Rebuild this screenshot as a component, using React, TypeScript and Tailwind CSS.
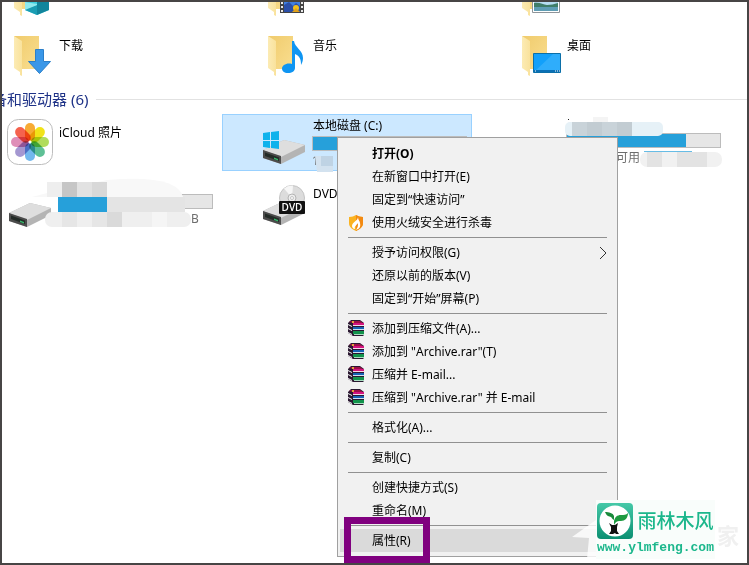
import { ReactNode } from "react";

const Folder = ({ children }: { children?: ReactNode }) => (
  <svg viewBox="0 0 48 48" className="w-12 h-12 shrink-0">
    <defs>
      <linearGradient id="folderBack" x1="0" y1="0" x2="1" y2="1">
        <stop offset="0" stopColor="#f0cb6c" />
        <stop offset="1" stopColor="#f9de90" />
      </linearGradient>
      <linearGradient id="folderFront" x1="0" y1="0" x2="1" y2="0">
        <stop offset="0" stopColor="#fcebb4" />
        <stop offset="1" stopColor="#f9e29c" />
      </linearGradient>
    </defs>
    <path d="M6 5h25v33H12z" fill="url(#folderBack)" />
    <path d="M6 5l8 5v35l-2-1v-3l-6-4z" fill="url(#folderFront)" />
    {children}
  </svg>
);

const ObjectsIcon = () => (
  <Folder>
    <path d="M17 24l12-5 12 5v15l-12 5-12-5z" fill="#3fd0df" />
    <path d="M29 30l12-6v15l-12 5z" fill="#12859c" />
    <path d="M17 38l12-4v10l-12-5z" fill="#1b9db3" />
    <path d="M17 31l12 2v1l-12 5z" fill="#8fe9ee" />
  </Folder>
);

const VideoIcon = () => (
  <Folder>
    <path d="M18 22h24v20H18z" fill="#444" />
    <path d="M22 23h16v18H22z" fill="#3f7fe0" />
    <path d="M22 34l5-3 4 4 3-3 4 3v6H22z" fill="#2b4fa8" />
    <circle cx="34" cy="37" r="3" fill="#f2c11d" />
    <path d="M30 41l4-4 4 4z" fill="#e0a01a" />
    <path d="M20 23v19M40 23v19" stroke="#e8e8e8" strokeWidth="2" strokeDasharray="2 2" />
  </Folder>
);

const PictureIcon = () => (
  <Folder>
    <path d="M16.5 22.5h27v19h-27z" fill="#fff" stroke="#8e9499" />
    <path d="M18 24h24v16H18z" fill="#b7dcf1" />
    <path d="M18 32c6-1 9 2 13 2s7-1 11-2v4H18z" fill="#3f7d68" />
    <path d="M18 36h24v4H18z" fill="#5f9db4" />
  </Folder>
);

const DownloadIcon = () => (
  <Folder>
    <path d="M27.5 18.5h8v12h7L31.5 42.5 20.5 30.5h7z" fill="#3a97e8" stroke="#2b7fc9" />
  </Folder>
);

const MusicIcon = () => (
  <Folder>
    <path
      d="M30 10h2c1 7 9 9 9 17 0 3-1 5-2 7 0-7-2-9-6-11v14c0 3-3 5-7 5s-6-2-6-4.5 3-5 7-5c1 0 2 0 3 .5z"
      fill="#0f95f2"
    />
  </Folder>
);

const DesktopIcon = () => (
  <Folder>
    <path d="M17.5 22.5h27v19h-27z" fill="#12a0fa" stroke="#0b6fa8" />
    <path d="M18 41L37 23h7v18z" fill="#2fadfb" />
    <path d="M18 39h26v2H18z" fill="#0a70b5" />
    <path d="M19 40h1M39 40h1M41 40h1M43 40h1" stroke="#fff" />
  </Folder>
);

const petals = ["#f7a21f", "#f0e000", "#a9d84a", "#4cb98a", "#62b0ec", "#9a8ccc", "#dc82b0", "#f4513a"];

const PhotosIcon = () => (
  <svg viewBox="0 0 48 48" className="w-12 h-12 shrink-0 overflow-visible">
    <rect x="-0.5" y="1.5" width="45" height="45" rx="11" fill="#fff" stroke="#bdbdbd" />
    {petals.map((color, i) => (
      <rect
        key={color}
        x="17"
        y="5"
        width="10"
        height="18"
        rx="5"
        fill={color}
        opacity="0.9"
        className="mix-blend-multiply"
        transform={`rotate(${i * 45} 22 24)`}
      />
    ))}
    <circle cx="22" cy="24" r="1.5" fill="#fff" />
  </svg>
);

const DriveShape = ({ y }: { y: number }) => (
  <g transform={`translate(0 ${y})`}>
    <path d="M1 10L22 0l21 5v7L19 24 1 18z" fill="#b4b4b4" />
    <path d="M1 10L22 0l21 5-24 12z" fill="#dedede" />
    <path d="M1 10l18 6v8L1 18z" fill="#4c4c4c" />
    <path d="M3 12.5l14 5V21L3 16z" fill="#232b27" />
    <path d="M12 17.5l4 1.5v1.5L12 19z" fill="#35b96a" />
  </g>
);

const DriveIcon = () => (
  <svg viewBox="0 0 48 48" className="w-12 h-12 shrink-0">
    <DriveShape y={24} />
  </svg>
);

const SystemDriveIcon = () => (
  <svg viewBox="0 0 48 48" className="w-12 h-12 shrink-0">
    <DriveShape y={22} />
    <path d="M1 15l7-1v8H1zM9 14l8-1v9H9zM1 23h7v7l-7-1zM9 23h8v8l-8-1z" fill="#0fb2ec" />
  </svg>
);

const DvdIcon = () => (
  <svg viewBox="0 0 48 48" className="w-12 h-12 shrink-0">
    <DriveShape y={22} />
    <circle cx="30" cy="19" r="12.5" fill="#dcdcdc" stroke="#c4c4c4" />
    <path d="M30 19L22 9.5a12 12 0 0 1 9-3z" fill="#f6f6f6" />
    <circle cx="30" cy="19" r="4" fill="#eee" stroke="#b4b4b4" />
    <circle cx="30" cy="19" r="1.5" fill="#fff" stroke="#c4c4c4" />
    <rect x="17" y="22" width="26" height="13" rx="1" fill="#111" />
    <text x="30" y="32" textAnchor="middle" fontSize="10" fontWeight="600" fill="#fff" fontFamily="Open Sans, sans-serif">
      DVD
    </text>
  </svg>
);

const RarIcon = () => (
  <svg viewBox="0 0 16 16" className="w-4 h-4 -translate-y-px">
    <path d="M0 3l3-3h9l4 3v12l-1 1H5l-5-3z" fill="#2a1830" />
    <path d="M1 2l2-1h9l3 2H5z" fill="#9c0f48" />
    <path d="M5 3h11v2H5z" fill="#d4147e" />
    <path d="M5 5h11v1H5z" fill="#f3dcea" />
    <path d="M5 7h11v2H5z" fill="#1562b4" />
    <path d="M5 9h11v1H5z" fill="#cfe0f2" />
    <path d="M5 11h11v3H5z" fill="#12934c" />
    <path d="M6 14h10v1H6z" fill="#a9dcc0" />
    <path d="M0 4l4 2v1L0 5zM0 8l4 2v1L0 9zM0 12l4 2v1l-4-2z" fill="#f6f6f6" />
    <path d="M4 1h2v2H4z" fill="#e2a43b" />
  </svg>
);

const ShieldIcon = () => (
  <svg viewBox="0 0 16 16" className="w-4 h-4">
    <path d="M1 2c3 0 5-1 7-2 2 1 4 2 7 2v6c0 4-3 6-7 8-4-2-7-4-7-8z" fill="#fbb321" />
    <path d="M8 0c2 1 4 2 7 2v6c0 4-3 6-7 8z" fill="#f38a12" />
    <path d="M10 2c0 4-6 5-6 9 0 1 1 3 3 3-1-3 2-4 3-6 0 3 0 4-2 7 3-1 5-3 4-7 0-2-2-3-2-6z" fill="#fff" />
  </svg>
);

type TileProps = {
  icon: ReactNode;
  label: string;
  used?: number;
  info?: string;
  infoClass?: string;
  selected?: boolean;
  children?: ReactNode;
};

const Tile = ({ icon, label, used, info, infoClass = "", selected, children }: TileProps) => (
  <li
    className={`relative flex gap-0.5 border pl-[39px] pt-[3px] pb-1 ${
      selected ? "border-[#99d1ff] bg-[#cce8ff]" : "border-transparent"
    }`}
  >
    {icon}
    {used === undefined ? (
      <span className="pl-px pt-[7px] leading-4 whitespace-nowrap">{label}</span>
    ) : (
      <div className="flex flex-col gap-0.5 w-[155px] h-12 leading-4 whitespace-nowrap">
        <span className="h-4 pl-px">{label}</span>
        <div className="h-[15px] shrink-0 border border-[#bcbcbc] bg-[#e6e6e6]">
          <div className="h-full bg-[#26a0da]" style={{ width: `${used}%` }} />
        </div>
        <span className={`text-[#6d6d6d] ${infoClass}`}>{info}</span>
      </div>
    )}
    {children}
  </li>
);

type MenuItem = { text: string; bold?: boolean; icon?: ReactNode; sub?: boolean; active?: boolean };

const menu: MenuItem[][] = [
  [
    { text: "打开(O)", bold: true },
    { text: "在新窗口中打开(E)" },
    { text: "固定到“快速访问”" },
    { text: "使用火绒安全进行杀毒", icon: <ShieldIcon /> },
  ],
  [{ text: "授予访问权限(G)", sub: true }, { text: "还原以前的版本(V)" }, { text: "固定到“开始”屏幕(P)" }],
  [
    { text: "添加到压缩文件(A)...", icon: <RarIcon /> },
    { text: '添加到 "Archive.rar"(T)', icon: <RarIcon /> },
    { text: "压缩并 E-mail...", icon: <RarIcon /> },
    { text: '压缩到 "Archive.rar" 并 E-mail', icon: <RarIcon /> },
  ],
  [{ text: "格式化(A)..." }],
  [{ text: "复制(C)" }],
  [{ text: "创建快捷方式(S)" }, { text: "重命名(M)" }],
  [{ text: "属性(R)", active: true }],
];

const ContextMenu = () => (
  <div className="absolute left-[335px] top-[135px] w-[281px] border border-[#a0a0a0] bg-[#f1f1f1] px-0.5 py-1">
    {menu.map((group, index) => (
      <div key={index}>
        {index > 0 && <hr className="mx-2 my-[3px] border-[#919191]" />}
        {group.map((el) => (
          <button
            key={el.text}
            type="button"
            className={`relative flex items-center w-full h-[23px] px-2 text-left whitespace-nowrap ${
              el.active ? "bg-[#dadada]" : ""
            } ${el.bold ? "font-bold" : ""}`}
          >
            <span className="w-6 shrink-0">{el.icon}</span>
            <span>{el.text}</span>
            {el.sub && (
              <svg viewBox="0 0 8 14" className="w-2 h-3.5 ml-auto" fill="none" stroke="#333">
                <path d="M1 1l6 6-6 6" />
              </svg>
            )}
            {el.active && <span className="absolute left-1 -top-3 w-[86px] h-[46px] border-[7px] border-[#80007f]" />}
          </button>
        ))}
      </div>
    ))}
  </div>
);

const Watermark = () => (
  <div className="absolute right-2 bottom-1 flex items-end">
    <svg viewBox="0 0 24 44" className="w-6 h-11" fill="#fff">
      <path d="M0 22L24 5v39h-9l2-21z" opacity="0.8" />
    </svg>
    <div className="flex flex-col items-center bg-[#f9fdfb] px-px pt-[3px] pb-0.5">
      <div className="flex items-center gap-1 text-[#1cb78c]">
        <svg viewBox="0 0 36 36" className="w-9 h-9">
          <defs>
            <linearGradient id="brand" x1="0" y1="0" x2="0" y2="1">
              <stop offset="0" stopColor="#45c9a8" />
              <stop offset="1" stopColor="#0c8f72" />
            </linearGradient>
          </defs>
          <rect width="36" height="36" rx="4" fill="url(#brand)" />
          <circle cx="18" cy="18" r="15.5" fill="#fff" />
          <path d="M17 17c-2-1-2-2-3-3-2-1-4 0-6-5 4 0 8 1 9 4z" fill="#188a3a" />
          <path d="M17 18c1-4 3-6 7-6 3 0 5 0 7-2 0 5-3 8-7 8-3 0-5 0-7 4z" fill="#1d9a40" />
          <path d="M12 20l3 2h3l3-2-1 4v4l2 3h-3l-1-1-2 1h-4l2-3v-4z" fill="#111" />
        </svg>
        <span className="text-[19px] leading-9 font-medium">雨林木风</span>
      </div>
      <span className="font-['Liberation_Mono',monospace] text-[13px] leading-[18px] font-bold text-[#1cb78c]">
        www.ylmfeng.com
      </span>
    </div>
    <span className="pb-2.5 pl-0.5 text-[22px] leading-7 font-bold text-[#f0f0f0]">家</span>
  </div>
);

const App = () => {
  return (
    <main className="relative min-h-screen overflow-hidden border-2 border-[#474545] bg-white font-['Noto_Sans','Noto_Sans_CJK_SC',sans-serif] text-xs text-black">
      <ul className="grid grid-cols-3 gap-x-1 gap-y-[3px] -ml-[34px] mr-[21px] -mt-[35px]">
        <Tile icon={<ObjectsIcon />} label="" />
        <Tile icon={<VideoIcon />} label="" />
        <Tile icon={<PictureIcon />} label="" />
        <Tile icon={<DownloadIcon />} label="下载" />
        <Tile icon={<MusicIcon />} label="音乐" />
        <Tile icon={<DesktopIcon />} label="桌面" />
      </ul>
      <h2 className="flex items-center gap-2 h-[30px] -ml-2.5 text-[15px] leading-4 text-[#1e3287] whitespace-nowrap">
        备和驱动器 (6)
        <span className="h-px grow bg-[#e2e2e2]" />
      </h2>
      <ul className="grid grid-cols-3 gap-x-1 gap-y-1 -ml-[34px] mr-[21px]">
        <Tile icon={<PhotosIcon />} label="iCloud 照片" />
        <Tile icon={<SystemDriveIcon />} label="本地磁盘 (C:)" used={52} info="112" selected>
          <svg viewBox="0 0 20 18" className="absolute left-[92px] top-10 w-5 h-[18px]">
            <path d="M0 1h18v16H2z" fill="#d3e2ef" />
            <path d="M6 1h12v10H6z" fill="#bfd3e4" />
          </svg>
        </Tile>
        <Tile icon={<span className="w-12 h-12 shrink-0" />} label="" used={78} info="可用" infoClass="pl-[50px]">
          <svg viewBox="0 0 250 57" className="absolute -left-px -top-px w-[250px] h-[57px]">
            <path d="M92 5h1v1h-1z" fill="#222" />
            <rect x="89" y="8" width="98" height="14" rx="5" fill="#e6f1f7" />
            <path d="M117 3h15v5h-15z" fill="#f4f4f4" />
            <path d="M96 8h60v14H96z" fill="#c9d3d9" />
            <path d="M111 8h15v14h-15zM141 8h15v14h-15z" fill="#c2ccd2" />
            <path d="M168 37h48v1h-48z" fill="#26a0da" opacity="0.7" />
            <rect x="164" y="38" width="82" height="15" rx="7" fill="#f1f1f1" />
            <path d="M171 38h15v15h-15zM201 38h30v15h-30z" fill="#e3e3e3" />
          </svg>
        </Tile>
        <Tile icon={<DriveIcon />} label="" used={32} info="B" infoClass="pl-[133px]">
          <svg viewBox="0 0 250 57" className="absolute -left-px -top-px w-[250px] h-[57px]">
            <path d="M139 5q70-6 76 17H64l15-4z" fill="#f8f8f8" />
            <path d="M79 7h15v15H79z" fill="#eee" />
            <path d="M94 7h15v15H94z" fill="#c6c6c6" />
            <path d="M109 7h15v15h-15z" fill="#e2e2e2" />
            <path d="M124 7h15v15h-15z" fill="#d8d8d8" />
            <path d="M90 22h49v15H90z" fill="#26a0da" />
            <path d="M139 22h78v15h-78z" fill="#e4e4e4" />
            <rect x="77" y="37" width="146" height="15" rx="7" fill="#efefef" />
            <path d="M94 37h15v15H94zM124 37h15v15h-15z" fill="#e6e6e6" />
            <path d="M139 37h15v15h-15z" fill="#dadada" />
            <path d="M184 37h15v15h-15z" fill="#f5f5f5" />
          </svg>
        </Tile>
        <Tile icon={<DvdIcon />} label="DVD" />
      </ul>
      <ContextMenu />
      <Watermark />
    </main>
  );
};

export default App;
